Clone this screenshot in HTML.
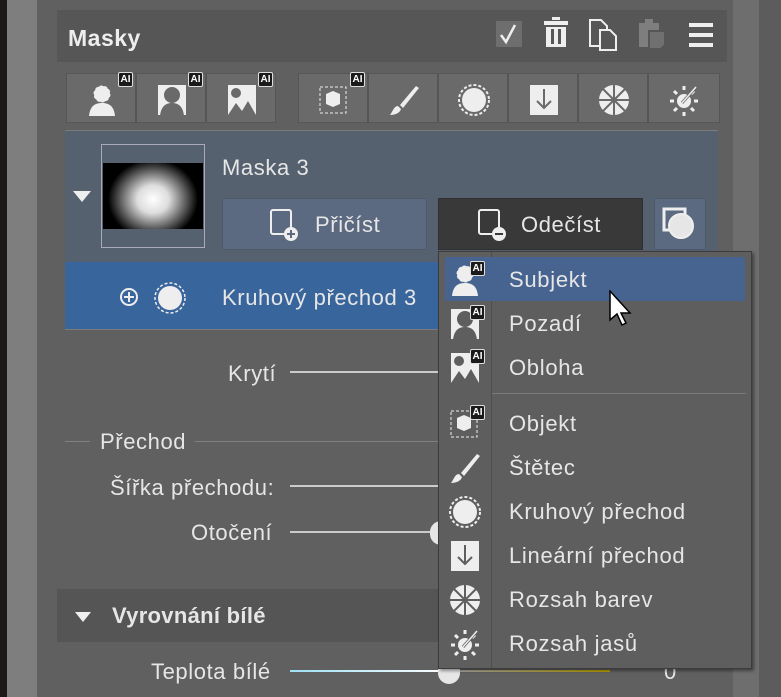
<!DOCTYPE html>
<html><head><meta charset="utf-8"><style>
*{margin:0;padding:0;box-sizing:border-box}
body{width:781px;height:697px;overflow:hidden;background:#5e5e5e;font-family:"Liberation Sans",sans-serif;color:#e6e6e6;position:relative}
.a{position:absolute}
.t{position:absolute;white-space:nowrap;font-size:22px;line-height:1;letter-spacing:0.6px}
.btn{position:absolute;top:73px;width:70px;height:50px;background:#6a6a6a;border:1px solid #565656}
.btn svg{position:absolute;left:19px;top:9px}
.ai{position:absolute;right:2px;top:-2px;width:15px;height:15px;background:#1a1a1a;border:1px solid #ddd;border-radius:2px;color:#fff;font-size:10px;font-weight:bold;line-height:13px;text-align:center;font-family:"Liberation Sans",sans-serif}
.mi{position:absolute;left:0;width:313px;height:44px}
.mi .l{position:absolute;left:70px;top:10px;font-size:22px;letter-spacing:0.7px;white-space:nowrap}
.mi svg{position:absolute;left:10px;top:6px}
.mi .ai{left:31px;right:auto;top:4px}
</style></head><body>
<div class="a" style="left:0;top:0;width:7px;height:697px;background:#1c1a16"></div>
<div class="a" style="left:7px;top:0;width:30px;height:697px;background:#7e7e7e"></div>
<div class="a" style="left:37px;top:0;width:696px;height:697px;background:#606060"></div>
<div class="a" style="left:733px;top:0;width:26px;height:697px;background:#6e6e6e"></div>
<div class="a" style="left:759px;top:0;width:22px;height:697px;background:#5c5c5c"></div>

<!-- header -->
<div class="a" style="left:57px;top:10px;width:670px;height:52px;background:#565656"></div>
<div class="t" style="left:68px;top:27px;font-size:23px;font-weight:bold;color:#eee;letter-spacing:0.5px">Masky</div>
<div class="a" style="left:496px;top:21px;width:26px;height:26px;background:#6e6e6e"></div>
<svg class="a" style="left:496px;top:21px" width="26" height="26"><path d="M5 14l5 7 9-17" stroke="#eee" stroke-width="2.5" fill="none"/></svg>
<svg class="a" style="left:542px;top:17px" width="28" height="32"><rect x="10" y="0" width="8" height="3" fill="#eee"/><rect x="2" y="4" width="24" height="4" fill="#eee"/><path d="M4 10h20v20H4z" fill="#eee"/><rect x="9" y="12" width="3" height="15" fill="#565656"/><rect x="16" y="12" width="3" height="15" fill="#565656"/></svg>
<svg class="a" style="left:588px;top:18px" width="34" height="34"><path d="M2 2h11l6 6v20H2z" fill="#565656" stroke="#eee" stroke-width="2"/><path d="M12 12h10l6 6v14H12z" fill="#565656" stroke="#eee" stroke-width="2"/></svg>
<svg class="a" style="left:638px;top:18px" width="34" height="34"><rect x="1" y="5" width="20" height="24" fill="#7e7e7e"/><rect x="7" y="1" width="8" height="6" fill="#7e7e7e"/><path d="M11 13h16v14l-4 4H11z" fill="#707070" stroke="#565656" stroke-width="2"/></svg>
<div class="a" style="left:689px;top:23px;width:24px;height:4px;background:#eee"></div>
<div class="a" style="left:689px;top:33px;width:24px;height:4px;background:#eee"></div>
<div class="a" style="left:689px;top:43px;width:24px;height:4px;background:#eee"></div>

<!-- toolbar -->
<div class="btn" style="left:66px"><svg width="34" height="34"><circle cx="16" cy="11" r="8" fill="#eee" stroke="#eee" stroke-dasharray="3 2"/><path d="M3 33c1-10 6-13 13-13s12 3 13 13z" fill="#eee"/></svg><div class="ai">AI</div></div>
<div class="btn" style="left:136px"><svg width="34" height="34"><rect x="2" y="2" width="28" height="30" fill="#eee"/><circle cx="16" cy="12" r="8" fill="#6a6a6a"/><path d="M4 33c1-10 6-13 12-13s11 3 12 13z" fill="#6a6a6a"/></svg><div class="ai">AI</div></div>
<div class="btn" style="left:206px"><svg width="34" height="34"><rect x="2" y="2" width="28" height="30" fill="#eee"/><circle cx="10" cy="10" r="5" fill="#6a6a6a"/><path d="M2 32l8-12 6 8 6-10 8 14z" fill="#6a6a6a"/></svg><div class="ai">AI</div></div>
<div class="btn" style="left:298px"><svg width="34" height="34"><rect x="2" y="4" width="26" height="26" fill="none" stroke="#eee" stroke-dasharray="3 2"/><path d="M8 11l7-3 7 3v10l-7 3-7-3z" fill="#eee"/></svg><div class="ai">AI</div></div>
<div class="btn" style="left:368px"><svg width="34" height="34"><path d="M28 3L12 22l3 3L31 5z" fill="#eee"/><path d="M10 23c-4 0-5 5-8 9 5 0 10-2 11-6z" fill="#eee"/></svg></div>
<div class="btn" style="left:438px"><svg width="34" height="34"><circle cx="16" cy="17" r="15" fill="none" stroke="#eee" stroke-width="2" stroke-dasharray="3 2"/><circle cx="16" cy="17" r="12" fill="#eee"/></svg></div>
<div class="btn" style="left:508px"><svg width="34" height="34"><rect x="2" y="2" width="28" height="30" fill="#eee"/><path d="M16 6v18M9 18l7 7 7-7" stroke="#6a6a6a" stroke-width="2" fill="none"/></svg></div>
<div class="btn" style="left:578px"><svg width="34" height="34"><circle cx="16" cy="17" r="15" fill="#eee"/><path d="M16 2v30M1 17h30M5 6l22 22M27 6L5 28" stroke="#6a6a6a" stroke-width="2"/></svg></div>
<div class="btn" style="left:648px;width:72px"><svg width="34" height="34"><circle cx="16" cy="18" r="7" fill="#eee"/><path d="M16 3v4M16 29v4M2 18h4M26 18h4M6 8l3 3M26 8l-3 3M6 28l3-3M26 28l-3-3" stroke="#eee" stroke-width="3"/><path d="M14 20l14-16" stroke="#6a6a6a" stroke-width="3"/><path d="M14 20l14-16" stroke="#eee" stroke-width="1.5"/></svg></div>

<!-- mask section -->
<div class="a" style="left:65px;top:130px;width:653px;height:1px;background:#7a7a7a"></div>
<div class="a" style="left:65px;top:131px;width:653px;height:131px;background:#566170"></div>
<div class="a" style="left:73px;top:191px;width:0;height:0;border-left:9px solid transparent;border-right:9px solid transparent;border-top:11px solid #eee"></div>
<div class="a" style="left:101px;top:144px;width:104px;height:104px;border:1px solid #aab;background:#566170"></div>
<div class="a" style="left:103px;top:163px;width:100px;height:66px;background:radial-gradient(ellipse 45px 40px at 50% 55%,#fff 0%,#ddd 35%,#555 75%,#000 100%)"></div>
<div class="t" style="left:222px;top:157px">Maska 3</div>
<div class="a" style="left:222px;top:198px;width:205px;height:52px;background:#5b6a80;border:1px solid #4d5a6c"></div>
<svg class="a" style="left:269px;top:208px" width="34" height="34"><rect x="2" y="2" width="20" height="24" rx="2" fill="none" stroke="#eee" stroke-width="2"/><circle cx="22" cy="26" r="7" fill="#eee"/><path d="M22 22v8M18 26h8" stroke="#5b6a80" stroke-width="2"/></svg>
<div class="t" style="left:315px;top:214px">Přičíst</div>
<div class="a" style="left:438px;top:198px;width:205px;height:52px;background:#393939;border:1px solid #303030"></div>
<svg class="a" style="left:477px;top:208px" width="34" height="34"><rect x="2" y="2" width="20" height="24" rx="2" fill="none" stroke="#eee" stroke-width="2"/><circle cx="22" cy="26" r="7" fill="#eee"/><path d="M18 26h8" stroke="#393939" stroke-width="2"/></svg>
<div class="t" style="left:521px;top:214px">Odečíst</div>
<div class="a" style="left:654px;top:198px;width:52px;height:52px;background:#5b6a80;border:1px solid #4d5a6c"></div>
<svg class="a" style="left:662px;top:207px" width="36" height="36"><rect x="2" y="2" width="21" height="21" fill="none" stroke="#eee" stroke-width="3"/><circle cx="19" cy="19" r="12" fill="#e6e6e6" stroke="#eee" stroke-width="2"/></svg>

<!-- selected row -->
<div class="a" style="left:65px;top:262px;width:380px;height:67px;background:#39659d"></div>
<div class="a" style="left:65px;top:329px;width:380px;height:1px;background:#7a7a7a"></div>
<svg class="a" style="left:118px;top:286px" width="22" height="22"><circle cx="11" cy="11" r="8" fill="none" stroke="#eee" stroke-width="2"/><path d="M11 6v10M6 11h10" stroke="#eee" stroke-width="2"/></svg>
<svg class="a" style="left:153px;top:281px" width="34" height="34"><circle cx="17" cy="17" r="15" fill="none" stroke="#eee" stroke-width="1.5" stroke-dasharray="3 2"/><circle cx="17" cy="17" r="12" fill="#eee"/></svg>
<div class="t" style="left:222px;top:287px">Kruhový přechod 3</div>

<!-- sliders -->
<div class="t" style="left:228px;top:363px">Krytí</div>
<div class="a" style="left:290px;top:371px;width:160px;height:2px;background:#ccc"></div>
<div class="a" style="left:65px;top:441px;width:25px;height:1px;background:#808080"></div>
<div class="t" style="left:100px;top:431px">Přechod</div>
<div class="a" style="left:195px;top:441px;width:250px;height:1px;background:#808080"></div>
<div class="t" style="left:110px;top:477px">Šířka přechodu:</div>
<div class="a" style="left:290px;top:485px;width:160px;height:2px;background:#ccc"></div>
<div class="t" style="left:191px;top:522px">Otočení</div>
<div class="a" style="left:290px;top:531px;width:160px;height:2px;background:#ccc"></div>
<div class="a" style="left:430px;top:521px;width:22px;height:24px;border-radius:11px;background:#e6e6e6"></div>

<div class="a" style="left:57px;top:589px;width:670px;height:53px;background:#555"></div>
<div class="a" style="left:75px;top:612px;width:0;height:0;border-left:8px solid transparent;border-right:8px solid transparent;border-top:10px solid #eee"></div>
<div class="t" style="left:112px;top:605px;font-weight:bold;font-size:22px;letter-spacing:0.3px">Vyrovnání bílé</div>
<div class="t" style="left:151px;top:661px">Teplota bílé</div>
<div class="a" style="left:290px;top:670px;width:160px;height:2px;background:linear-gradient(90deg,#9de0f5,#fff)"></div>
<div class="a" style="left:450px;top:670px;width:160px;height:2px;background:linear-gradient(90deg,#aaa,#b9a000)"></div>
<div class="a" style="left:438px;top:660px;width:22px;height:24px;border-radius:11px;background:#e6e6e6"></div>
<div class="t" style="left:664px;top:661px">0</div>

<!-- menu -->
<div class="a" style="left:438px;top:251px;width:314px;height:418px;background:#5e5e5e;border:1px solid #3c3c3c;box-shadow:2px 2px 3px rgba(0,0,0,.4)">
 <div class="a" style="left:52px;top:0;width:1px;height:416px;background:#4e4e4e"></div>
 <div class="a" style="left:6px;top:5px;width:300px;height:44px;background:#46648f"></div>
 <div class="a" style="left:53px;top:141px;width:254px;height:1px;background:#7a7a7a"></div>
 <div class="mi" style="top:5px"><svg width="34" height="34"><circle cx="16" cy="11" r="8" fill="#eee" stroke="#eee" stroke-dasharray="3 2"/><path d="M3 33c1-10 6-13 13-13s12 3 13 13z" fill="#eee"/></svg><div class="ai">AI</div><div class="l">Subjekt</div></div>
 <div class="mi" style="top:49px"><svg width="34" height="34"><rect x="2" y="2" width="28" height="30" fill="#eee"/><circle cx="16" cy="12" r="8" fill="#5e5e5e"/><path d="M4 33c1-10 6-13 12-13s11 3 12 13z" fill="#5e5e5e"/></svg><div class="ai">AI</div><div class="l">Pozadí</div></div>
 <div class="mi" style="top:93px"><svg width="34" height="34"><rect x="2" y="2" width="28" height="30" fill="#eee"/><circle cx="10" cy="10" r="5" fill="#5e5e5e"/><path d="M2 32l8-12 6 8 6-10 8 14z" fill="#5e5e5e"/></svg><div class="ai">AI</div><div class="l">Obloha</div></div>
 <div class="mi" style="top:149px"><svg width="34" height="34"><rect x="2" y="4" width="26" height="26" fill="none" stroke="#eee" stroke-dasharray="3 2"/><path d="M8 11l7-3 7 3v10l-7 3-7-3z" fill="#eee"/></svg><div class="ai">AI</div><div class="l">Objekt</div></div>
 <div class="mi" style="top:193px"><svg width="34" height="34"><path d="M28 3L12 22l3 3L31 5z" fill="#eee"/><path d="M10 23c-4 0-5 5-8 9 5 0 10-2 11-6z" fill="#eee"/></svg><div class="l">Štětec</div></div>
 <div class="mi" style="top:237px"><svg width="34" height="34"><circle cx="16" cy="17" r="15" fill="none" stroke="#eee" stroke-width="2" stroke-dasharray="3 2"/><circle cx="16" cy="17" r="12" fill="#eee"/></svg><div class="l">Kruhový přechod</div></div>
 <div class="mi" style="top:281px"><svg width="34" height="34"><rect x="2" y="2" width="28" height="30" fill="#eee"/><path d="M16 6v18M9 18l7 7 7-7" stroke="#5e5e5e" stroke-width="2" fill="none"/></svg><div class="l">Lineární přechod</div></div>
 <div class="mi" style="top:325px"><svg width="34" height="34"><circle cx="16" cy="17" r="15" fill="#eee"/><path d="M16 2v30M1 17h30M5 6l22 22M27 6L5 28" stroke="#5e5e5e" stroke-width="2"/></svg><div class="l">Rozsah barev</div></div>
 <div class="mi" style="top:369px"><svg width="34" height="34"><circle cx="16" cy="18" r="7" fill="#eee"/><path d="M16 3v4M16 29v4M2 18h4M26 18h4M6 8l3 3M26 8l-3 3M6 28l3-3M26 28l-3-3" stroke="#eee" stroke-width="3"/><path d="M14 20l14-16" stroke="#5e5e5e" stroke-width="3"/><path d="M14 20l14-16" stroke="#eee" stroke-width="1.5"/></svg><div class="l">Rozsah jasů</div></div>
</div>
<!-- cursor -->
<svg class="a" style="left:609px;top:290px" width="28" height="40"><path d="M1 1v29l7-6 5 11 4-2-5-10 9 0z" fill="#fff" stroke="#000" stroke-width="1.5"/></svg>
</body></html>
